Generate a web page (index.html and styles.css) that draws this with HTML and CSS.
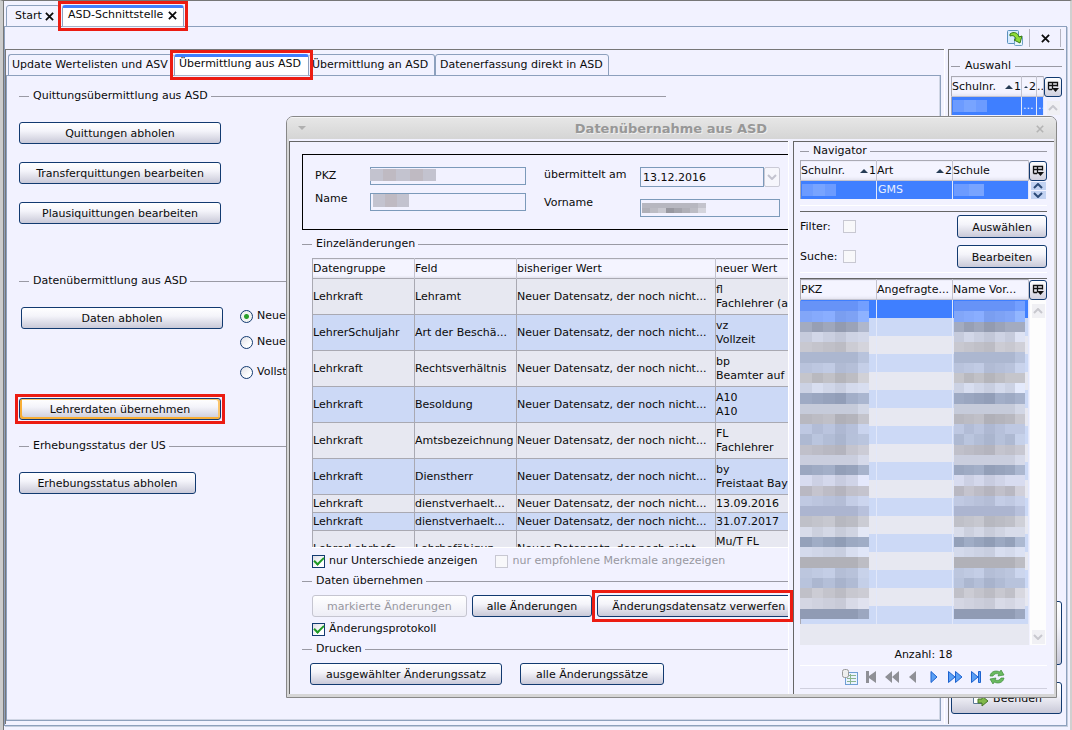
FILE: index.html
```html
<!DOCTYPE html>
<html lang="de">
<head>
<meta charset="utf-8">
<title>ASD-Schnittstelle</title>
<link rel="stylesheet" href="styles.css">
</head>
<body>
<svg class="defs" aria-hidden="true">
  <symbol id="columns" viewBox="0 0 12 12"><path d="M1.500 8.500V1.500h9v4M1.500 4.500h9M5.500 1.500v7M1.500 8.500H5" fill="none" stroke="#111" stroke-width="1.300"/><path d="M5 7h7l-3.500 4z" fill="#111"/></symbol>
  <symbol id="up" viewBox="0 0 10 6"><path d="M1 5l4-4 4 4" fill="none" stroke="currentColor" stroke-width="2"/></symbol>
  <symbol id="down" viewBox="0 0 10 6"><path d="M1 1l4 4 4-4" fill="none" stroke="currentColor" stroke-width="2"/></symbol>
  <symbol id="close" viewBox="0 0 10 10"><path d="M1 1l8 8M9 1L1 9" fill="none" stroke="currentColor" stroke-width="2"/></symbol>
  <symbol id="sort" viewBox="0 0 8 4"><path d="M0 4l4-4 4 4z" fill="#263c55"/></symbol>
</svg>
<div class="app">
  <nav class="tabs">
    <button class="tab start">Start <svg class="x"><use href="#close"/></svg></button>
    <button class="tab active marked">ASD-Schnittstelle <svg class="x"><use href="#close"/></svg></button>
  </nav>
  <div class="frame">
    <div class="toolbar">
      <button class="tool"><svg width="18" height="18" viewBox="0 0 18 18"><rect x="1.500" y="1.500" width="11" height="13" rx="1" fill="#d8ecff" stroke="#5b91bd"/><rect x="8.500" y="7.500" width="8" height="9" rx="1" fill="#e8f4ff" stroke="#6fa0c6"/><path d="M4 5c4-3 8-1 9 3l3-1-2 7-6-3 2-1C9 7 7 6 4 7z" fill="#8fdc38" stroke="#377a18"/></svg></button>
      <button class="tool close"><svg width="9" height="9"><use href="#close"/></svg></button>
    </div>
    <div class="columns">
      <main class="work">
        <nav class="subtabs">
          <button class="tab first">Update Wertelisten und ASV</button>
          <button class="tab active marked">Übermittlung aus ASD</button>
          <button class="tab third">Übermittlung an ASD</button>
          <button class="tab last">Datenerfassung direkt in ASD</button>
        </nav>
        <div class="page">
          <section class="receipts">
            <h2 class="legend">Quittungsübermittlung aus ASD</h2>
            <div class="stack">
              <button class="btn wide">Quittungen abholen</button>
              <button class="btn wide">Transferquittungen bearbeiten</button>
              <button class="btn wide">Plausiquittungen bearbeiten</button>
            </div>
          </section>
          <section class="transfer">
            <h2 class="legend">Datenübermittlung aus ASD</h2>
            <div class="fetch">
              <button class="btn wide">Daten abholen</button>
              <div class="radios">
                <label><input type="radio" name="mode" checked>Neue</label>
                <label><input type="radio" name="mode">Neue</label>
                <label><input type="radio" name="mode">Vollst</label>
              </div>
            </div>
            <button class="btn wide focus marked">Lehrerdaten übernehmen</button>
          </section>
          <section class="status">
            <h2 class="legend">Erhebungsstatus der US</h2>
            <button class="btn">Erhebungsstatus abholen</button>
          </section>
        </div>
      </main>
      <aside class="side">
        <h2 class="legend">Auswahl</h2>
        <div class="tablebox">
          <table class="grid pick">
            <thead><tr><th class="c1">Schulnr. <span class="sort"><svg><use href="#sort"/></svg>1</span></th><th class="c2"><span class="sort"><svg class="half"><use href="#sort"/></svg>2</span></th><th>..</th></tr></thead>
            <tbody><tr class="sel"><td><span class="mosaic m3"><i></i><i></i><i></i></span></td><td>...</td><td>..</td></tr></tbody>
          </table>
          <div class="rail"><button class="cfg"><svg><use href="#columns"/></svg></button><button class="arrow"><svg><use href="#up"/></svg></button></div>
        </div>
        <div class="sidebtns">
          <button class="btn tall"></button>
          <button class="btn quit"><svg width="18" height="18" viewBox="0 0 18 18"><path d="M2.500 1.500h9v12h-9z" fill="#fff" stroke="#5a7896"/><path d="M7 9h4V6l6 5-6 5v-3H7z" fill="#80b84a" stroke="#47752a"/></svg>Beenden</button>
        </div>
      </aside>
    </div>
  </div>
</div>

<div class="dialog" role="dialog">
  <header class="title"><svg width="8" height="5" viewBox="0 0 10 6"><path d="M0 0h10L5 5z" fill="#b0b0b0"/></svg><h1>Datenübernahme aus ASD</h1><svg width="8" height="8"><use href="#close"/></svg></header>
  <div class="panes">
    <div class="left">
      <div class="clip">
        <form class="record">
          <div class="fields a">
            <label for="pkz">PKZ</label><span class="field"><input id="pkz"><span class="mosaic m5"><i></i><i></i><i></i><i></i><i></i></span></span>
            <label for="name">Name</label><span class="field"><input id="name"><span class="mosaic m3"><i></i><i></i><i></i></span></span>
          </div>
          <div class="fields b">
            <label for="date">übermittelt am</label><span class="date"><input id="date" value="13.12.2016"><button type="button" disabled><svg><use href="#down"/></svg></button></span>
            <label for="vor">Vorname</label><span class="field"><input id="vor"><span class="mosaic fine" data-cols="8" data-rows="2"></span></span>
          </div>
        </form>
      </div>
      <h2 class="legend">Einzeländerungen</h2>
      <div class="clip changes">
        <table>
          <thead><tr><th class="g">Datengruppe</th><th class="g">Feld</th><th class="o">bisheriger Wert</th><th class="n">neuer Wert</th></tr></thead>
          <tbody>
            <tr><td>Lehrkraft</td><td>Lehramt</td><td>Neuer Datensatz, der noch nicht...</td><td>fl<br>Fachlehrer (a</td></tr>
            <tr><td>LehrerSchuljahr</td><td>Art der Beschä...</td><td>Neuer Datensatz, der noch nicht...</td><td>vz<br>Vollzeit</td></tr>
            <tr><td>Lehrkraft</td><td>Rechtsverhältnis</td><td>Neuer Datensatz, der noch nicht...</td><td>bp<br>Beamter auf</td></tr>
            <tr><td>Lehrkraft</td><td>Besoldung</td><td>Neuer Datensatz, der noch nicht...</td><td>A10<br>A10</td></tr>
            <tr><td>Lehrkraft</td><td>Amtsbezeichnung</td><td>Neuer Datensatz, der noch nicht...</td><td>FL<br>Fachlehrer</td></tr>
            <tr><td>Lehrkraft</td><td>Dienstherr</td><td>Neuer Datensatz, der noch nicht...</td><td>by<br>Freistaat Bay</td></tr>
            <tr class="short"><td>Lehrkraft</td><td>dienstverhaelt...</td><td>Neuer Datensatz, der noch nicht...</td><td>13.09.2016</td></tr>
            <tr class="short"><td>Lehrkraft</td><td>dienstverhaelt...</td><td>Neuer Datensatz, der noch nicht...</td><td>31.07.2017</td></tr>
            <tr><td>LehrerLehrbefa...</td><td>Lehrbefähigun...</td><td>Neuer Datensatz, der noch nicht...</td><td>Mu/T FL<br>&nbsp;</td></tr>
          </tbody>
        </table>
      </div>
      <div class="checks">
        <label><input type="checkbox" checked>nur Unterschiede anzeigen</label>
        <label class="off"><input type="checkbox" disabled>nur empfohlene Merkmale angezeigen</label>
      </div>
      <h2 class="legend">Daten übernehmen</h2>
      <div class="actions">
        <button class="btn" disabled>markierte Änderungen</button>
        <button class="btn">alle Änderungen</button>
        <div class="discard marked"><div class="clip"><button class="btn">Änderungsdatensatz verwerfen</button></div></div>
      </div>
      <div class="checks protocol"><label><input type="checkbox" checked>Änderungsprotokoll</label></div>
      <h2 class="legend">Drucken</h2>
      <div class="print">
        <button class="btn">ausgewählter Änderungssatz</button>
        <button class="btn">alle Änderungssätze</button>
      </div>
    </div>
    <div class="right">
      <h2 class="legend">Navigator</h2>
      <div class="tablebox">
        <table class="grid nav">
          <thead><tr><th>Schulnr. <span class="sort"><svg><use href="#sort"/></svg>1</span></th><th>Art <span class="sort"><svg><use href="#sort"/></svg>2</span></th><th>Schule</th></tr></thead>
          <tbody><tr class="sel"><td><span class="mosaic m3"><i></i><i></i><i></i></span></td><td>GMS</td><td><span class="mosaic m2"><i></i><i></i></span></td></tr></tbody>
        </table>
        <div class="rail"><button class="cfg"><svg><use href="#columns"/></svg></button><button class="step"><svg><use href="#up"/></svg></button><button class="step"><svg><use href="#down"/></svg></button></div>
      </div>
      <div class="find">
        <label>Filter:<input type="checkbox" disabled></label><button class="btn">Auswählen</button>
        <label>Suche:<input type="checkbox" disabled></label><button class="btn">Bearbeiten</button>
      </div>
      <div class="tablebox list">
        <div class="listarea">
          <table class="grid nav">
            <thead><tr><th>PKZ</th><th>Angefragte...</th><th>Name Vor...</th></tr></thead>
            <tbody id="rows"></tbody>
          </table>
          <div class="mosaic big pkz" data-cols="6"></div>
          <div class="mosaic big names" data-cols="7"></div>
        </div>
        <div class="rail"><button class="cfg"><svg><use href="#columns"/></svg></button><div class="track"><button class="arrow"><svg><use href="#up"/></svg></button><button class="arrow"><svg><use href="#down"/></svg></button></div></div>
      </div>
      <p class="count">Anzahl: 18</p>
      <div class="pager">
        <button><svg viewBox="0 0 16 16"><rect x="3.500" y="3.500" width="12" height="12" fill="#eaf3ff" stroke="#6f9ed4"/><path d="M5 6.500h9M5 9.500h9M5 12.500h9M8.500 5v10" stroke="#8ab58e"/><rect x=".5" y=".5" width="6" height="8" rx="2" fill="#eee" stroke="#999"/></svg></button>
        <button><svg viewBox="0 0 16 16"><path d="M3 2h3v5l7-5v12L6 9v5H3z" fill="#8f9096"/></svg></button>
        <button><svg viewBox="0 0 16 16"><path d="M8 2v12L1 8zM15 2v12L8 8z" fill="#8f9096"/></svg></button>
        <button><svg viewBox="0 0 16 16"><path d="M11 2v12L4 8z" fill="#8f9096"/></svg></button>
        <button><svg viewBox="0 0 16 16"><path d="M5 2.500v11L11 8z" fill="#5aa0f5" stroke="#1c62cf"/></svg></button>
        <button><svg viewBox="0 0 16 16"><path d="M1.500 2.500v11L8 8zM8.500 2.500v11L15 8z" fill="#5aa0f5" stroke="#1c62cf"/></svg></button>
        <button><svg viewBox="0 0 16 16"><path d="M3.500 2.500v11L10 8zM10.500 2.500h2v11h-2z" fill="#5aa0f5" stroke="#1c62cf"/></svg></button>
        <button><svg viewBox="0 0 16 16"><path d="M1 7c1-5 6-6 10-4l1-2 3 5-6 1 1-2C7 4 5 5 4 7zM15 9c-1 5-6 6-10 4l-1 2-3-5 6-1-1 2c3 1 5 0 6-2z" fill="#6abb60" stroke="#3d8a3a" stroke-width=".7"/></svg></button>
      </div>
    </div>
  </div>
</div>
<script src="app.js"></script>
</body>
</html>
```
FILE: styles.css
```css
* { box-sizing: border-box; }
html { background: #f2f2ff; }
body { margin: 0; color: #0b0b0b; position: relative; min-height: 100vh; overflow: hidden; }
body, button, input, table { font: 11px/14px "DejaVu Sans", sans-serif; }
h1, h2, p { margin: 0; font-size: 11px; font-weight: 400; line-height: 14px; }
button { color: inherit; padding: 0; white-space: nowrap; }
svg { display: block; flex: none; }
.defs { position: absolute; width: 0; height: 0; }

.app { min-height: 100vh; display: flex; flex-direction: column; border-top: 1px solid #777; border-left: 3px solid #ccc; border-right: 2px solid #d0d0d0; padding: 4px 3px 4px 1px; box-shadow: inset 1px 0 #777; }
.tabs, .subtabs { display: flex; align-items: stretch; height: 22px; }
.tabs { padding-left: 2px; gap: 2px; flex: none; }
.tab { background: #f2f2ff; border: 1px solid #8da0bd; border-radius: 3px 3px 0 0; padding: 0 4px; display: flex; align-items: center; gap: 3px; }
.tab.start { width: 54px; padding-left: 8px; }
.tab.active { background: #fff; border-top: 3px solid #3f7fff; padding-bottom: 4px; border-bottom-color: #a9b6cb; }
.tabs .active { width: 122px; padding-left: 5px; gap: 5px; }
.x { width: 9px; height: 9px; }
.marked { position: relative; z-index: 1; }
.marked::after { content: ""; position: absolute; inset: -5px; border: 3px solid #ec1c12; pointer-events: none; }
.marked.active::after { inset: -7px -5px -5px; }

.frame { flex: 1; display: flex; flex-direction: column; margin-top: -1px; border: 1px solid #8da0bd; box-shadow: 1px 1px #c4cddd; padding: 0 2px 1px 0; }
.toolbar { display: flex; justify-content: flex-end; align-items: center; height: 22px; padding-right: 3px; gap: 5px; }
.tool { border: 0; background: none; }
.tool.close { width: 32px; height: 18px; display: grid; place-items: center; border: solid #b4b4c0; border-width: 0 1px; }
.columns { flex: 1; display: flex; gap: 4px; }
.work { flex: 1; min-width: 0; display: flex; flex-direction: column; border: solid #777; border-width: 1px 0 0 1px; box-shadow: 1px 0 #fff; padding: 4px 3px 3px 0; }
.subtabs { padding-left: 2px; }
.subtabs .tab { padding: 0 3px; }
.subtabs .first { width: 166px; overflow: hidden; justify-content: flex-start; border-right: 0; }
.subtabs .active { width: 135px; padding: 0 4px 4px; }
.subtabs .third { width: 126px; border-left: 0; }
.subtabs .last { padding: 0 5px 0 4px; }
.page { flex: 1; margin-top: -1px; border: 1px solid #8da0bd; box-shadow: inset -1px -1px #d0d6e4; padding: 13px 12px; }
.legend { display: flex; align-items: center; gap: 3px; white-space: nowrap; }
.legend::before, .legend::after { content: ""; height: 1px; background: #9a9aa4; }
.legend::before { width: 10px; margin-right: 1px; }
.legend::after { flex: 1; }
.page .legend { margin-bottom: 19px; }
.receipts { max-width: 647px; margin-bottom: 50px; }
.transfer { margin-bottom: 19px; }
.stack { display: flex; flex-direction: column; gap: 18px; align-items: flex-start; }
.btn { height: 22px; padding: 2px 14px 0; border: 1px solid #123a70; border-radius: 3px; background: linear-gradient(#fff, #f4f4fa 40%, #c9c9d8); display: flex; align-items: center; justify-content: center; }
.btn:disabled { border-color: #c5c5d0; color: #9898a0; background: linear-gradient(#fff, #ededf6); }
.wide { width: 202px; }
.focus { box-shadow: inset 2px -2px #f8ae36, inset -2px 1px #fbc56c; }
.status .btn { min-width: 177px; }
.fetch { display: flex; gap: 17px; padding-left: 2px; margin-bottom: 19px; }
.radios { display: grid; gap: 12px; padding-top: 2px; }
.radios label:last-child { margin-top: 4px; }
label { display: flex; align-items: center; white-space: nowrap; }
input[type=radio], input[type=checkbox] { appearance: none; flex: none; width: 13px; height: 13px; margin: 0 4px 0 0; border: 1px solid #123a70; background: linear-gradient(135deg, #dfdfe6, #fff 70%); }
input[type=radio] { border-radius: 50%; }
input[type=radio]:checked { background: radial-gradient(circle, #2ba02b 2px, #f2f4f2 3px); }
input[type=checkbox]:disabled { border-color: #c8c8d2; background: #f8f8fa; }
input[type=checkbox]:checked { display: grid; place-items: center; }
input[type=checkbox]:checked::after { content: ""; width: 8px; height: 4px; border: solid #1f9a26; border-width: 0 0 2px 2px; rotate: -45deg; margin-bottom: 2px; }

.side { width: 116px; flex: none; display: flex; flex-direction: column; border: solid #777; border-width: 1px 0 0 1px; padding: 9px 2px 10px; }
.side .legend::before { width: 9px; }
.side .legend { gap: 4px; }
.side .tablebox { margin-top: 3px; }
.sidebtns { margin-top: auto; display: flex; flex-direction: column; gap: 17px; }
.tall { height: 64px; }
.quit { height: 32px; gap: 4px; }
.tablebox { display: flex; }
.grid { border-collapse: collapse; table-layout: fixed; border: solid #aaaab4; border-width: 1px 0 0 1px; flex: 1; width: 100%; min-width: 0; }
.grid th { height: 20px; padding: 0; font-weight: 400; text-align: left; white-space: nowrap; border-right: 1px solid #c3c3cf; border-bottom: 1px solid #c3c3cf; background: linear-gradient(#f4f4ff 80%, #e2e2ee); overflow: hidden; position: relative; }
.grid td { height: 18px; padding: 0 1px; border-right: 1px solid #e2e8fa; overflow: hidden; white-space: nowrap; }
.sel { background: #3f7fff; color: #e8efff; }
.sort { float: right; display: flex; align-items: center; gap: 1px; }
.sort svg { width: 8px; height: 4px; }
.sort .half { width: 4px; }
.pick .c1 { width: 70px; }
.pick .c2 { width: 15px; }
.rail { width: 18px; flex: none; display: flex; flex-direction: column; align-items: center; }
.cfg { width: 18px; height: 20px; flex: none; margin-top: 1px; border: 1px solid #123a70; border-radius: 3px; background: linear-gradient(#fff, #d0d0de); display: grid; place-items: center; }
.cfg svg { width: 12px; height: 12px; }
.arrow, .step { border: 0; display: grid; place-items: center; color: #c8c8ce; background: #f0f0f4; width: 13px; height: 14px; margin-top: 4px; }
.arrow svg, .step svg { width: 10px; height: 6px; }
.step { width: 15px; height: 8px; margin-top: 1px; color: #2c4a78; background: #c2d2f2; }

.dialog { position: absolute; z-index: 2; left: 286px; right: 15px; top: 116px; border: 1px solid #888; border-radius: 7px 7px 0 0; background: #f2f2ff; overflow: hidden; }
.title { height: 22px; display: flex; align-items: center; padding: 0 12px 0 11px; background: linear-gradient(#e6e6e6, #d5d5d5); color: #b4b4b4; border-top: 1px solid #f4f4f4; }
.title h1 { flex: 1; text-align: center; font-weight: 700; font-size: 13px; color: #979797; text-shadow: 1px 1px #eee; }
.panes { display: flex; gap: 5px; border: solid #d6d6d6; border-width: 0 2px 3px; padding-top: 2px; background: #f2f2ff; }
.left { flex: 1; min-width: 0; padding: 12px 0 7px 12px; border: solid #666; border-width: 1px 0 0 1px; box-shadow: 1px 0 #fff; }
.clip { overflow: hidden; }
.record { width: 520px; height: 76px; border: 1px solid #000; display: flex; gap: 18px; padding: 12px; }
.fields { display: grid; align-content: start; }
.a { grid-template-columns: 55px 156px; row-gap: 8px; }
.b { grid-template-columns: 96px 140px; row-gap: 12px; }
.fields > label { align-self: start; height: 18px; }
.a > label:nth-of-type(2) { height: 12px; }
.b > label { height: 16px; }
.b > label:nth-of-type(2) { height: 8px; }
.field { position: relative; }
.field input, .date input { display: block; width: 100%; height: 18px; border: 1px solid #7c9aba; background: #f2f2ff; padding: 0 2px; color: inherit; }
.date { display: flex; }
.date input { height: 20px; flex: 1; width: 0; }
.date button { width: 16px; border: 1px solid #cacad6; border-radius: 2px; color: #c3c3cf; background: #f6f6fc; display: grid; place-items: center; }
.date svg { width: 10px; height: 6px; }
.left > .legend { margin-top: 7px; }
.changes { margin: 7px 0 0 10px; height: 290px; border-bottom: 1px solid #fff; }
.changes table { width: 520px; table-layout: fixed; border-collapse: collapse; border: 1px solid #a9a9b2; }
.changes th { height: 20px; text-align: left; font-weight: 400; padding: 0; border: 0; border-right: 1px solid #c3c3cf; background: linear-gradient(#f4f4ff 85%, #dcdce8); }
.changes td { height: 36px; padding: 0; border: 1px solid #a9a9b2; white-space: nowrap; background: #e7e8f1; }
.changes tr:nth-child(even) td { background: #ccd9f6; }
.changes .short td { height: 18px; }
.g { width: 102px; }
.o { width: 199px; }
.checks { display: flex; gap: 18px; padding: 6px 0 0 10px; }
.off { color: #98989f; }
.left > .checks + .legend { margin-top: 6px; }
.actions { display: flex; gap: 5px; padding: 7px 0 0 10px; }
.discard { flex: 1; min-width: 0; }
.protocol { padding-top: 5px; }
.print { display: flex; gap: 18px; padding: 7px 0 0 8px; }
.print .btn { padding: 2px 15px 0; }
.right { width: 261px; flex: none; border: solid #666; border-width: 1px 0 0 1px; padding: 2px 7px 5px 6px; display: flex; flex-direction: column; }
.right .legend::before { width: 9px; }
.right > .tablebox { margin-top: 2px; }
.find { margin-top: 6px; border-top: 1px solid #fff; padding: 9px 0 5px; display: grid; grid-template-columns: 1fr 90px; row-gap: 8px; position: relative; border-bottom: 1px solid #fff; }
.find::before { content: ""; position: absolute; left: 0; right: 0; top: 5px; height: 1px; background: #666; }
.find label { justify-content: space-between; width: 60px; }
.find .btn { height: 23px; }
.find { row-gap: 7px; padding-bottom: 4px; }
.right > .list { margin-top: 5px; border-top: 1px solid #666; }
.listarea { flex: 1; min-width: 0; position: relative; background: #e7e8f1; padding-bottom: 21px; }
.list tbody tr:nth-child(odd):not(.sel) { background: #e7e8f1; }
.list tbody tr:nth-child(even):not(.sel) { background: #ccd9f6; }
.track { flex: 1; width: 16px; background: #fdfdfd; display: flex; flex-direction: column; justify-content: space-between; align-items: center; padding-bottom: 1px; }
.count { text-align: center; padding: 3px 0 3px; border-bottom: 1px solid #fff; }
.pager { display: flex; justify-content: center; gap: 5px; height: 23px; align-items: center; border-bottom: 1px solid #d0d0de; }
.pager button { border: 0; background: none; }
.pager svg { width: 16px; height: 16px; }

.mosaic { display: grid; grid-auto-flow: column; grid-auto-columns: 1fr; height: 12px; }
.mosaic i { background: #6c9bff; }
.mosaic i:nth-child(even) { background: #78a4ff; }
.grid td .m3 { width: 34px; }
.grid td .m2 { width: 30px; }
.field .mosaic { position: absolute; left: 0; top: 2px; height: 12px; }
.field .m5 { width: 66px; }
.field .m3 { left: 3px; top: 1px; width: 36px; height: 13px; }
.field .mosaic i { background: #c3c3cf; }
.field .mosaic i:nth-child(even) { background: #bfbac2; }
.field .fine { left: 2px; top: 4px; width: 64px; height: 10px; }
.mosaic.big { position: absolute; top: 22px; height: 318px; }
.pkz { left: 0; width: 69px; }
.names { left: 154px; width: 71px; }
```
FILE: app.js
```js
// Rows of the person list
const rows = document.getElementById('rows');
for (let i = 0; i < 18; i++) {
  const tr = rows.insertRow();
  if (i === 0) tr.className = 'sel';
  for (let c = 0; c < 3; c++) tr.insertCell();
}

// Anonymised values are covered by a pixel mosaic
const tones = ['6f9bff', '82a6f8', '9ba3b8', 'cacfe0', 'c4c4cc', 'b4bfd8', 'b9c3dc', 'bdbdc3', 'd0d6e8', '9aa6c0', 'ced3e2', 'b8b8c0', 'b6c0da', 'b2bdd6', 'bcbcc6', 'd2d6e6', '9ba7c0', 'd0d4e8', 'bdbcc6', 'bcc5de', 'b4bdd8', 'bfc0c8', 'd0d4e2', '98a5be', 'd0d6e8', 'b9b9c0', 'bcc6de', 'b0bbd4', 'c4c4cc', 'd0d2df', '98a3bc'];
function paint(box, list, spread) {
  const cols = Number(box.dataset.cols);
  box.style.gridTemplateColumns = `repeat(${cols}, 1fr)`;
  box.style.gridAutoFlow = 'row';
  list.forEach((hex, r) => {
    for (let c = 0; c < cols; c++) {
      const shift = ((r * 7 + c * 5 + r * c) % 5 - 2) * spread + (c === cols - 1 ? 12 : 0);
      const rgb = [0, 2, 4].map(k => Math.min(255, parseInt(hex.substr(k, 2), 16) + shift));
      const cell = document.createElement('i');
      cell.style.background = `rgb(${rgb})`;
      box.append(cell);
    }
  });
}
document.querySelectorAll('.big').forEach(box => paint(box, tones, 4));
document.querySelectorAll('.fine').forEach(box => paint(box, ['cfcfd8', 'b0b0b8'], 12));
```
